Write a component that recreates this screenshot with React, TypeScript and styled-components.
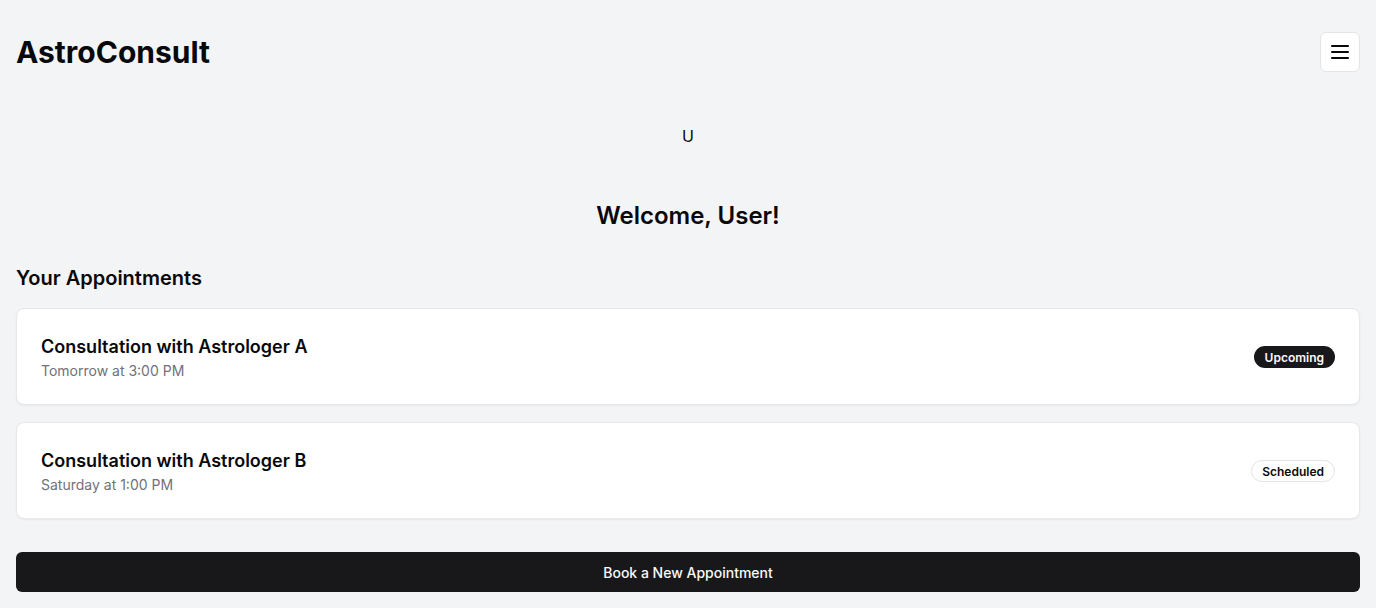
import React from "react";
import styled, { createGlobalStyle } from "styled-components";

const Global = createGlobalStyle`
  * { box-sizing: border-box; }
  html, body { margin: 0; padding: 0; background: #f3f4f6; }
  body { font-family: Inter, "Noto Sans", sans-serif; color: #09090b; }
`;

const Page = styled.div`
  padding: 0 16px 16px;
  display: flex;
  flex-direction: column;
`;

const Header = styled.header`
  display: flex;
  align-items: center;
  justify-content: space-between;
  padding: 32px 0 16px;
`;

const Logo = styled.h1`
  margin: 0;
  font-size: 30px;
  line-height: 40px;
  font-weight: 700;
`;

const IconButton = styled.button`
  width: 40px;
  height: 40px;
  display: flex;
  align-items: center;
  justify-content: center;
  background: #ffffff;
  border: 1px solid #e4e4e7;
  border-radius: 6px;
  color: #09090b;
  padding: 0;
`;

const Profile = styled.section`
  display: flex;
  flex-direction: column;
  align-items: center;
  margin-top: 8px;
`;

const Avatar = styled.div`
  width: 80px;
  height: 80px;
  border-radius: 50%;
  display: flex;
  align-items: center;
  justify-content: center;
  font-size: 16px;
  color: #09090b;
`;

const Welcome = styled.h2`
  margin: 24px 0 0;
  font-size: 24px;
  line-height: 32px;
  font-weight: 600;
`;

const SectionTitle = styled.h3`
  margin: 32px 0 16px;
  font-size: 20px;
  line-height: 28px;
  font-weight: 600;
`;

const List = styled.div`
  display: flex;
  flex-direction: column;
  gap: 17px;
`;

const Card = styled.div`
  background: #ffffff;
  border: 1px solid #e8e8eb;
  border-radius: 8px;
  box-shadow: 0 1px 2px rgba(0, 0, 0, 0.05);
  padding: 24px 24px 23px;
  display: flex;
  align-items: center;
  justify-content: space-between;
`;

const CardTitle = styled.div`
  font-size: 18px;
  line-height: 28px;
  font-weight: 600;
`;

const CardSub = styled.div`
  font-size: 14px;
  line-height: 20px;
  color: #71717a;
`;

const Badge = styled.span<{ $solid?: boolean }>`
  display: inline-flex;
  align-items: center;
  height: 22px;
  padding: 0 10px;
  border-radius: 999px;
  font-size: 12px;
  font-weight: 600;
  background: ${(p) => (p.$solid ? "#18181b" : "#ffffff")};
  color: ${(p) => (p.$solid ? "#fafafa" : "#09090b")};
  border: 1px solid ${(p) => (p.$solid ? "transparent" : "#e4e4e7")};
`;

const PrimaryButton = styled.button`
  margin-top: 33px;
  height: 40px;
  width: 100%;
  background: #18181b;
  color: #fafafa;
  border: none;
  border-radius: 6px;
  font-family: inherit;
  font-size: 14px;
  font-weight: 500;
`;

const MenuIcon = () => (
  <svg width="24" height="24" viewBox="0 0 24 24" fill="none" stroke="currentColor" strokeWidth="2" strokeLinecap="round">
    <line x1="4" y1="6" x2="20" y2="6" />
    <line x1="4" y1="12" x2="20" y2="12" />
    <line x1="4" y1="18" x2="20" y2="18" />
  </svg>
);

const appointments = [
  { title: "Consultation with Astrologer A", time: "Tomorrow at 3:00 PM", status: "Upcoming", solid: true },
  { title: "Consultation with Astrologer B", time: "Saturday at 1:00 PM", status: "Scheduled", solid: false },
];

export default function App() {
  return (
    <>
      <Global />
      <Page>
        <Header>
          <Logo>AstroConsult</Logo>
          <IconButton aria-label="Menu">
            <MenuIcon />
          </IconButton>
        </Header>
        <Profile>
          <Avatar>U</Avatar>
          <Welcome>Welcome, User!</Welcome>
        </Profile>
        <SectionTitle>Your Appointments</SectionTitle>
        <List>
          {appointments.map((a) => (
            <Card key={a.title}>
              <div>
                <CardTitle>{a.title}</CardTitle>
                <CardSub>{a.time}</CardSub>
              </div>
              <Badge $solid={a.solid}>{a.status}</Badge>
            </Card>
          ))}
        </List>
        <PrimaryButton>Book a New Appointment</PrimaryButton>
      </Page>
    </>
  );
}
